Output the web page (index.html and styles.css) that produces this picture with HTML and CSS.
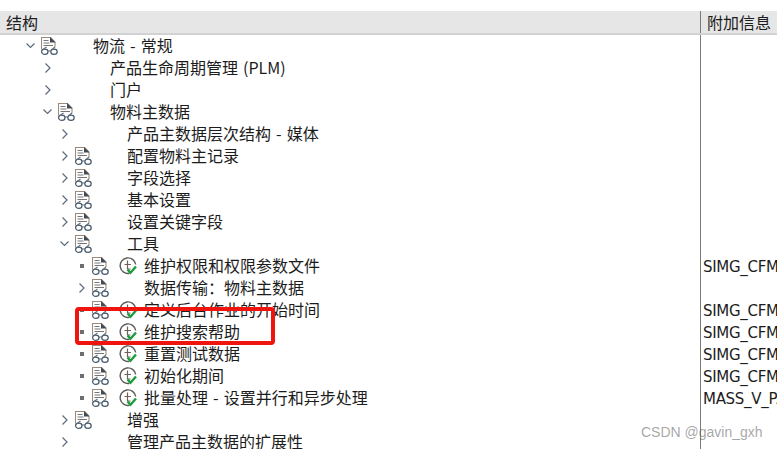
FILE: index.html
```html
<!DOCTYPE html>
<html lang="zh">
<head>
<meta charset="utf-8">
<title>结构</title>
<link rel="stylesheet" href="styles.css">
</head>
<body>
<svg class="defs" width="0" height="0" aria-hidden="true">
  <symbol id="doc" viewBox="0 0 17 18">
    <path d="M.5 12.5V.5H9.5L14 5V10" fill="none" stroke="#9c8a7c" stroke-width="1.1"/>
    <path d="M9 0L14.5 5.5H9Z" fill="#3f4b57"/>
    <path d="M2.5 3.5H7.5M2.5 6H8.5M2.5 8.5H12" stroke="#767676" stroke-width="1.1"/>
    <ellipse cx="3.8" cy="14.8" rx="3.2" ry="2.6" fill="none" stroke="#46596c" stroke-width="1.2"/>
    <ellipse cx="13" cy="14.8" rx="3.2" ry="2.6" fill="none" stroke="#46596c" stroke-width="1.2"/>
    <path d="M7 14H9.8M2 12.5L5.5 10M11 12.5L14 10" fill="none" stroke="#5f6e7e" stroke-width="1.1"/>
  </symbol>
  <symbol id="clock" viewBox="0 0 18 18">
    <path d="M10.5 16.3A7.8 7.8 0 1 1 16.7 7.5" fill="none" stroke="#5a5856" stroke-width="1.4"/>
    <path d="M8.5 3.5V12H11.5M5.5 7.5H12" fill="none" stroke="#6f6254" stroke-width="1.2"/>
    <path d="M8.5 12.5L11.5 15.8L17 9.5" fill="none" stroke="#1c9c3e" stroke-width="2.4"/>
  </symbol>
  <symbol id="right" viewBox="0 0 16 16">
    <path d="M3.5 3.5L8 8L3.5 12.5" fill="none" stroke="#5b6b7c" stroke-width="1.2"/>
  </symbol>
  <symbol id="down" viewBox="0 0 16 16">
    <path d="M1.5 5.5L5.5 9.5L9.5 5.5" fill="none" stroke="#5b6b7c" stroke-width="1.2"/>
  </symbol>
</svg>

<main class="table">
  <header class="head">
    <div class="cell-main">结构</div>
    <div class="cell-extra">附加信息</div>
  </header>
  <div class="body">
    <div class="row d0"><div class="cell-main"><span class="tw"><svg class="ic16"><use href="#down"/></svg></span><svg class="doc"><use href="#doc"/></svg><span class="ck"></span><span class="lb">物流 - 常规</span></div><div class="cell-extra"></div></div>
    <div class="row d1"><div class="cell-main"><span class="tw"><svg class="ic16"><use href="#right"/></svg></span><span class="nodoc"></span><span class="ck"></span><span class="lb">产品生命周期管理 (PLM)</span></div><div class="cell-extra"></div></div>
    <div class="row d1"><div class="cell-main"><span class="tw"><svg class="ic16"><use href="#right"/></svg></span><span class="nodoc"></span><span class="ck"></span><span class="lb">门户</span></div><div class="cell-extra"></div></div>
    <div class="row d1"><div class="cell-main"><span class="tw"><svg class="ic16"><use href="#down"/></svg></span><svg class="doc"><use href="#doc"/></svg><span class="ck"></span><span class="lb">物料主数据</span></div><div class="cell-extra"></div></div>
    <div class="row d2"><div class="cell-main"><span class="tw"><svg class="ic16"><use href="#right"/></svg></span><span class="nodoc"></span><span class="ck"></span><span class="lb">产品主数据层次结构 - 媒体</span></div><div class="cell-extra"></div></div>
    <div class="row d2"><div class="cell-main"><span class="tw"><svg class="ic16"><use href="#right"/></svg></span><svg class="doc"><use href="#doc"/></svg><span class="ck"></span><span class="lb">配置物料主记录</span></div><div class="cell-extra"></div></div>
    <div class="row d2"><div class="cell-main"><span class="tw"><svg class="ic16"><use href="#right"/></svg></span><svg class="doc"><use href="#doc"/></svg><span class="ck"></span><span class="lb">字段选择</span></div><div class="cell-extra"></div></div>
    <div class="row d2"><div class="cell-main"><span class="tw"><svg class="ic16"><use href="#right"/></svg></span><svg class="doc"><use href="#doc"/></svg><span class="ck"></span><span class="lb">基本设置</span></div><div class="cell-extra"></div></div>
    <div class="row d2"><div class="cell-main"><span class="tw"><svg class="ic16"><use href="#right"/></svg></span><svg class="doc"><use href="#doc"/></svg><span class="ck"></span><span class="lb">设置关键字段</span></div><div class="cell-extra"></div></div>
    <div class="row d2"><div class="cell-main"><span class="tw"><svg class="ic16"><use href="#down"/></svg></span><svg class="doc"><use href="#doc"/></svg><span class="ck"></span><span class="lb">工具</span></div><div class="cell-extra"></div></div>
    <div class="row d3"><div class="cell-main"><span class="tw"><i class="dot"></i></span><svg class="doc"><use href="#doc"/></svg><span class="ck"><svg class="clock"><use href="#clock"/></svg></span><span class="lb">维护权限和权限参数文件</span></div><div class="cell-extra">SIMG_CFMENUOLSDSPGV</div></div>
    <div class="row d3"><div class="cell-main"><span class="tw"><svg class="ic16"><use href="#right"/></svg></span><svg class="doc"><use href="#doc"/></svg><span class="ck"></span><span class="lb">数据传输：物料主数据</span></div><div class="cell-extra"></div></div>
    <div class="row d3"><div class="cell-main"><span class="tw"><i class="dot"></i></span><svg class="doc"><use href="#doc"/></svg><span class="ck"><svg class="clock"><use href="#clock"/></svg></span><span class="lb">定义后台作业的开始时间</span></div><div class="cell-extra">SIMG_CFMENUOLSDSPGV</div></div>
    <div class="row d3"><div class="cell-main"><span class="tw"><i class="dot"></i></span><svg class="doc"><use href="#doc"/></svg><span class="ck"><svg class="clock"><use href="#clock"/></svg></span><span class="lb">维护搜索帮助</span></div><div class="cell-extra">SIMG_CFMENUOLSDSPGV</div></div>
    <div class="row d3"><div class="cell-main"><span class="tw"><i class="dot"></i></span><svg class="doc"><use href="#doc"/></svg><span class="ck"><svg class="clock"><use href="#clock"/></svg></span><span class="lb">重置测试数据</span></div><div class="cell-extra">SIMG_CFMENUOLSDSPGV</div></div>
    <div class="row d3"><div class="cell-main"><span class="tw"><i class="dot"></i></span><svg class="doc"><use href="#doc"/></svg><span class="ck"><svg class="clock"><use href="#clock"/></svg></span><span class="lb">初始化期间</span></div><div class="cell-extra">SIMG_CFMENUOLSDSPGV</div></div>
    <div class="row d3"><div class="cell-main"><span class="tw"><i class="dot"></i></span><svg class="doc"><use href="#doc"/></svg><span class="ck"><svg class="clock"><use href="#clock"/></svg></span><span class="lb">批量处理 - 设置并行和异步处理</span></div><div class="cell-extra">MASS_V_PARALLEL</div></div>
    <div class="row d2"><div class="cell-main"><span class="tw"><svg class="ic16"><use href="#right"/></svg></span><svg class="doc"><use href="#doc"/></svg><span class="ck"></span><span class="lb">增强</span></div><div class="cell-extra"></div></div>
    <div class="row d2"><div class="cell-main"><span class="tw"><svg class="ic16"><use href="#right"/></svg></span><span class="nodoc"></span><span class="ck"></span><span class="lb">管理产品主数据的扩展性</span></div><div class="cell-extra"></div></div>
  </div>
</main>
<div class="highlight"></div>
<div class="watermark">CSDN @gavin_gxh</div>
</body>
</html>
```
FILE: styles.css
```css
html, body {
  margin: 0;
  padding: 0;
  width: 777px;
  height: 449px;
  overflow: hidden;
  background: #fff;
}
body {
  position: relative;
  font-family: "Noto Sans CJK SC", "Noto Sans", sans-serif;
  font-size: 16px;
  color: #1c1c1c;
}
.defs { position: absolute; }
.table {
  padding-top: 11px;
  height: 438px;
  overflow: hidden;
}
.head {
  display: flex;
  height: 22px;
  background: #e6e6e6;
  border-bottom: 2px solid #d2d2d2;
  line-height: 22px;
}
.head .cell-main { padding-left: 6px; }
.head .cell-extra { padding-left: 6px; }
.cell-main {
  width: 700px;
  flex: none;
  display: flex;
  align-items: center;
  box-sizing: border-box;
  white-space: nowrap;
}
.cell-extra {
  flex: 1;
  min-width: 0;
  border-left: 1px solid #7a7a7a;
  padding-left: 2px;
  overflow: hidden;
  white-space: nowrap;
}
.row {
  display: flex;
  height: 22px;
  line-height: 22px;
}
.row .cell-extra {
  font-family: "DejaVu Sans", sans-serif;
  font-size: 15px;
  line-height: 24px;
  letter-spacing: -0.3px;
}
.d0 .cell-main { padding-left: 25px; }
.d1 .cell-main { padding-left: 42px; }
.d2 .cell-main { padding-left: 59px; }
.d3 .cell-main { padding-left: 76px; }
.tw {
  width: 16px;
  height: 22px;
  flex: none;
  display: flex;
  align-items: center;
}
.ic16 { width: 16px; height: 16px; display: block; }
.dot {
  width: 4px;
  height: 4px;
  margin-left: 4px;
  background: #6e6e6e;
}
.doc {
  width: 17px;
  height: 18px;
  flex: none;
  margin-right: 1px;
}
.nodoc { width: 18px; flex: none; }
.ck {
  width: 34px;
  flex: none;
  padding-left: 9px;
  box-sizing: border-box;
  display: flex;
  align-items: center;
}
.clock { width: 18px; height: 18px; display: block; }
.lb {
  display: block;
  margin-top: -2px;
  word-spacing: 1.5px;
}
.highlight {
  position: absolute;
  left: 75px;
  top: 307px;
  width: 192px;
  height: 30px;
  border: 4px solid #f0140f;
  border-radius: 4px;
}
.watermark {
  position: absolute;
  left: 641px;
  top: 423px;
  font-family: "Liberation Sans", sans-serif;
  font-size: 14px;
  line-height: 18px;
  color: rgba(90, 90, 90, 0.55);
}
```
